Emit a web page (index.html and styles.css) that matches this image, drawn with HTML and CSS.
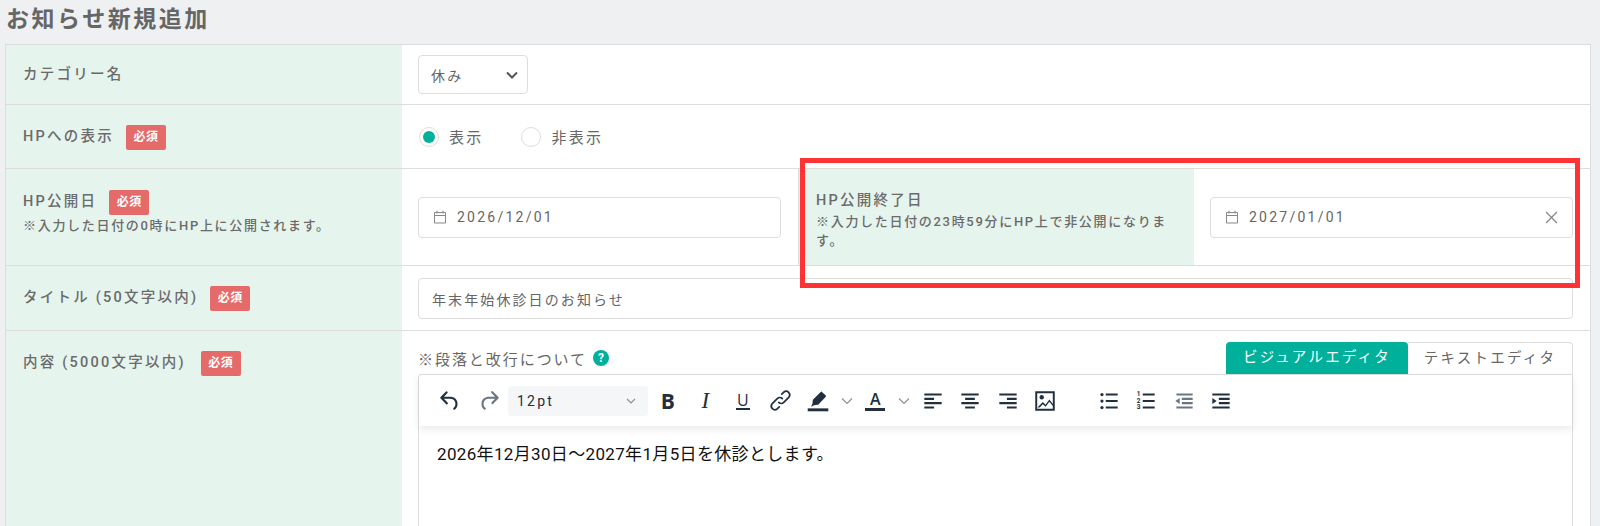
FILE: index.html
```html
<!DOCTYPE html>
<html lang="ja">

<head>
  <meta charset="UTF-8">
  <meta name="viewport" content="width=device-width, initial-scale=1.0">
  <title>お知らせ新規追加</title>
  <link rel="stylesheet" href="styles.css">
</head>

<body>
  <h1 class="page-title">お知らせ新規追加</h1>

  <div class="form-table">
    <div class="row">
      <div class="label label--single">カテゴリー名</div>
      <div class="field field--select">
        <div class="select-box">
          <span>休み</span>
          <svg class="select-arrow" viewBox="0 0 12 8"><path d="M1 1.5l5 5 5-5" /></svg>
        </div>
      </div>
    </div>

    <div class="row">
      <div class="label"><span class="label-head">HPへの表示<span class="badge">必須</span></span></div>
      <div class="field radios">
        <span class="radio radio--on"></span><span class="radio-text">表示</span>
        <span class="radio"></span><span class="radio-text">非表示</span>
      </div>
    </div>

    <!-- 公開日は4カラム -->
    <div class="row row--dates">
      <div class="label label--half">
        <span class="label-head">HP公開日<span class="badge">必須</span></span>
        <p class="note">※入力した日付の0時にHP上に公開されます。</p>
      </div>
      <div class="field field--half">
        <div class="input">
          <svg class="cal" viewBox="0 0 16 16"><path d="M2.5 3.5h11v10.5h-11zM2.5 6.5h11M5 1.5v3M11 1.5v3" /></svg>
          <span>2026/12/01</span>
        </div>
      </div>
      <div class="label label--half label--second">
        <span class="label-head">HP公開終了日</span>
        <p class="note">※入力した日付の23時59分にHP上で非公開になります。</p>
      </div>
      <div class="field field--half">
        <div class="input">
          <svg class="cal" viewBox="0 0 16 16"><path d="M2.5 3.5h11v10.5h-11zM2.5 6.5h11M5 1.5v3M11 1.5v3" /></svg>
          <span>2027/01/01</span>
          <svg class="clear" viewBox="0 0 12 12"><path d="M1 1l10 10M11 1L1 11" /></svg>
        </div>
      </div>
    </div>

    <div class="row">
      <div class="label"><span class="label-head">タイトル (50文字以内)<span class="badge">必須</span></span></div>
      <div class="field field--title">
        <div class="input input--wide"><span>年末年始休診日のお知らせ</span></div>
      </div>
    </div>

    <div class="row row--last">
      <div class="label"><span class="label-head">内容 (5000文字以内)<span class="badge">必須</span></span></div>
      <div class="field field--editor">
        <div class="editor-head">
          <div class="help">※段落と改行について<span class="help-mark">?</span></div>
          <div class="tabs">
            <span class="tab tab--on">ビジュアルエディタ</span>
            <span class="tab">テキストエディタ</span>
          </div>
        </div>
        <div class="editor">
          <div class="toolbar">
            <span class="tb-btn"><svg viewBox="0 0 24 24"><path d="M6.4 8H12c3.7 0 6.2 2 6.8 5.1.6 2.7-.4 5.6-2.3 6.8a1 1 0 01-1-1.8c1.1-.6 1.8-2.7 1.4-4.6-.5-2.1-2.1-3.5-4.9-3.5H6.4l3.3 3.3a1 1 0 11-1.4 1.4l-5-5a1 1 0 010-1.4l5-5a1 1 0 011.4 1.4L6.4 8z" /></svg></span>
            <span class="tb-btn tb-btn--off tb-btn--redo"><svg viewBox="0 0 24 24"><path d="M17.6 10H12c-2.8 0-4.4 1.4-4.9 3.5-.4 2 .3 4 1.4 4.6a1 1 0 11-1 1.8c-2-1.2-2.9-4.1-2.3-6.8.6-3 3-5.1 6.8-5.1h5.6l-3.3-3.3a1 1 0 111.4-1.4l5 5a1 1 0 010 1.4l-5 5a1 1 0 01-1.4-1.4l3.3-3.3z" /></svg></span>
            <span class="tb-select">12pt<svg class="tb-arrow" viewBox="0 0 10 6"><path d="M1 1l4 4 4-4" /></svg></span>
            <span class="tb-btn tb-btn--b">B</span>
            <span class="tb-btn tb-btn--i">I</span>
            <span class="tb-btn tb-btn--u"><span>U</span></span>
            <span class="tb-btn tb-btn--link"><svg viewBox="0 0 24 24"><path d="M10.5 13.5a3 3 0 004.2 0l4.300-4.300a3 3 0 00-4.200-4.200l-1.800 1.800M13.500 10.500a3 3 0 00-4.200 0L5 14.800A3 3 0 009.200 19l1.800-1.800" /></svg></span>
            <span class="tb-btn"><svg viewBox="0 0 24 24"><path d="M15.6 3.6l3.4 3.2a1 1 0 010 1.400l-6.600 7a1 1 0 01-.7.300l-3.300.400-2.800 1.400 1.300-2.900.3-3.200a1 1 0 01.3-.7l7-6.900a1 1 0 011.400 0z" /><rect x="2.500" y="18.800" width="19" height="2.700" /></svg></span>
            <svg class="tb-chevron" viewBox="0 0 12 8"><path d="M1 1.500l5 5 5-5" /></svg>
            <span class="tb-btn tb-btn--a"><span>A</span></span>
            <svg class="tb-chevron" viewBox="0 0 12 8"><path d="M1 1.500l5 5 5-5" /></svg>
            <span class="tb-btn"><svg viewBox="0 0 24 24"><path d="M4 5h16v2H4zM4 9h9v2H4zM4 13h16v2H4zM4 17h9v2H4z" /></svg></span>
            <span class="tb-btn"><svg viewBox="0 0 24 24"><path d="M4 5h16v2H4zM7.500 9h9v2h-9zM4 13h16v2H4zM7.500 17h9v2h-9z" /></svg></span>
            <span class="tb-btn"><svg viewBox="0 0 24 24"><path d="M4 5h16v2H4zM11 9h9v2h-9zM4 13h16v2H4zM11 17h9v2h-9z" /></svg></span>
            <span class="tb-btn"><svg viewBox="0 0 24 24"><path fill-rule="evenodd" d="M3 3h18v18H3zM4.800 4.800v14.400h14.400V4.800z" /><circle cx="9" cy="8.500" r="2" /><path d="M5 18l5-5 2.500 2.500L16 10.500l3.500 4.500v1.800L16 12.700l-3.400 4.600-2.600-2.400-3 3.100z" /></svg></span>
            <span class="tb-btn tb-btn--group"><svg viewBox="0 0 24 24"><circle cx="5.500" cy="6" r="1.500" /><circle cx="5.500" cy="12" r="1.500" /><circle cx="5.500" cy="18" r="1.500" /><path d="M9 5h11v2H9zM9 11h11v2H9zM9 17h11v2H9z" /></svg></span>
            <span class="tb-btn"><svg viewBox="0 0 24 24"><text class="num" x="3.500" y="7.500">1</text><text class="num" x="3.500" y="13.500">2</text><text class="num" x="3.500" y="19.500">3</text><path d="M9 5h11v2H9zM9 11h11v2H9zM9 17h11v2H9z" /></svg></span>
            <span class="tb-btn tb-btn--off"><svg viewBox="0 0 24 24"><path d="M5 5h15v2H5zM10 9h10v2H10zM10 13h10v2H10zM5 17h15v2H5zM8 9.300v5.400L4 12z" /></svg></span>
            <span class="tb-btn"><svg viewBox="0 0 24 24"><path d="M4 5h16v2H4zM10 9h10v2H10zM10 13h10v2H10zM4 17h16v2H4zM4 9.300v5.400L8 12z" /></svg></span>
          </div>
          <div class="editor-body">2026年12月30日〜2027年1月5日を休診とします。</div>
        </div>
      </div>
    </div>
  </div>

  <div class="highlight-box"></div>
</body>

</html>
```

FILE: styles.css
```css
* {
  box-sizing: border-box;
}

html,
body {
  height: 526px;
  overflow: hidden;
}

body {
  margin: 0;
  padding: 0 9px 0 5px;
  background: #eef0f2;
  color: #666;
  font-family: "Roboto", "Noto Sans CJK JP", sans-serif;
  font-size: 14px;
  letter-spacing: .16em;
  position: relative;
}

.page-title {
  margin: 0;
  height: 44px;
  padding-left: 1px;
  font-size: 23px;
  line-height: 40px;
  font-weight: 700;
  letter-spacing: .11em;
  color: #666;
}

.form-table {
  background: #fff;
  border: 1px solid #ddd;
  border-bottom: 0;
}

.row {
  display: flex;
  border-bottom: 1px solid #ddd;
}

.row--dates {
  height: 97px;
}

.row--last {
  border-bottom: 0;
  height: 195px;
}

.label {
  width: 25%;
  flex: none;
  padding: 20px 17px 18px;
  background: #e5f4ed;
  font-size: 14.5px;
  font-weight: 500;
  color: #6b6b6b;
}

.label--single {
  padding-top: 17px;
  padding-bottom: 16px;
  line-height: 25px;
}

.label--half {
  padding-top: 21px;
  padding-bottom: 0;
}

.label--second {
  padding-top: 20px;
  border-left: 1px solid #ddd;
}

.label-head {
  display: flex;
  align-items: flex-start;
  height: 25px;
  line-height: 23px;
}

.badge {
  margin-left: 12px;
  width: 40px;
  height: 25px;
  line-height: 25px;
  text-align: center;
  background: #e56a6a;
  border-radius: 2px;
  color: #fff;
  font-size: 12px;
  font-weight: 700;
  letter-spacing: .04em;
}

.row--last .badge {
  margin-left: 15px;
}

.note {
  margin: 2px 0 0;
  font-size: 13px;
  line-height: 18px;
  letter-spacing: .13em;
}

.label--second .note {
  margin-top: -2px;
  line-height: 19px;
}

.field {
  flex: 1;
  padding: 11px 17px 11px 16px;
}

.field--half {
  width: 25%;
  flex: none;
  display: flex;
  align-items: center;
}

.field--select {
  padding-top: 10px;
  padding-bottom: 10px;
}

.field--title {
  padding-top: 12px;
}

.select-box {
  width: 110px;
  height: 39px;
  padding: 0 9px 0 12px;
  display: flex;
  align-items: center;
  justify-content: space-between;
  border: 1px solid #ddd;
  border-radius: 4px;
  font-size: 14px;
}

.select-arrow {
  width: 12px;
  height: 8px;
  fill: none;
  stroke: #555;
  stroke-width: 2;
}

.radios {
  display: flex;
  align-items: center;
  padding-top: 21px;
  padding-bottom: 21px;
  padding-left: 17px;
  font-size: 15px;
}

.radio {
  width: 20px;
  height: 20px;
  border-radius: 50%;
  border: 1px solid #ddd;
  background: #fff;
  display: flex;
  align-items: center;
  justify-content: center;
}

.radio--on::after {
  content: '';
  width: 12px;
  height: 12px;
  border-radius: 50%;
  background: #00b09b;
}

.radio-text {
  margin: 0 38px 0 10px;
}

.input {
  width: 100%;
  height: 41px;
  padding: 0 12px 0 13px;
  display: flex;
  align-items: center;
  border: 1px solid #ddd;
  border-radius: 4px;
  background: #fff;
}

.input--wide {
  letter-spacing: .15em;
}

.cal {
  width: 16px;
  height: 16px;
  margin-right: 9px;
  fill: none;
  stroke: #888;
  stroke-width: 1;
}

.clear {
  width: 13px;
  height: 13px;
  margin-left: auto;
  margin-right: 2px;
  fill: none;
  stroke: #888;
  stroke-width: 1.2;
}

.field--editor {
  padding-top: 11px;
  padding-bottom: 0;
}

.editor-head {
  display: flex;
  justify-content: space-between;
  height: 32px;
}

.help {
  display: flex;
  align-items: center;
  height: 32px;
  font-size: 15px;
  letter-spacing: .13em;
}

.help-mark {
  margin-left: 6px;
  width: 16px;
  height: 16px;
  border-radius: 50%;
  background: #00b09b;
  color: #fff;
  font-size: 12px;
  font-weight: 700;
  line-height: 16px;
  text-align: center;
  letter-spacing: 0;
}

.tabs {
  display: flex;
}

.tab {
  width: 165px;
  height: 32px;
  line-height: 31px;
  text-align: center;
  border: 1px solid #ddd;
  border-bottom: 0;
  border-left: 0;
  border-radius: 0 4px 0 0;
  font-size: 14.5px;
}

.tab--on {
  width: 182px;
  background: #00b09b;
  border: 0;
  border-radius: 4px 4px 0 0;
  color: #fff;
}

.editor {
  height: 152px;
  border: 1px solid #ddd;
  border-bottom: 0;
  border-radius: 4px 0 0 0;
  background: #fff;
}

.toolbar {
  height: 51px;
  padding-left: 12px;
  display: flex;
  align-items: center;
  box-shadow: 0 3px 8px rgba(0, 0, 0, .09);
  color: #222f3e;
}

.tb-btn {
  width: 37.5px;
  height: 32px;
  flex: none;
  display: flex;
  align-items: center;
  justify-content: center;
  letter-spacing: 0;
}

.tb-btn svg {
  width: 26px;
  height: 26px;
  fill: #222f3e;
}

.tb-btn--link svg {
  width: 29px;
  height: 29px;
  fill: none;
  stroke: #222f3e;
  stroke-width: 1.4;
  stroke-linecap: round;
}

.tb-btn .num {
  font-family: "Roboto", sans-serif;
  font-size: 6px;
  font-weight: 700;
}

.tb-btn--off svg {
  fill: #6b7683;
}

.tb-btn--redo {
  margin-left: 2px;
}

.tb-btn--group {
  margin-left: 26px;
}

.tb-btn--b {
  margin-left: 1px;
  font-family: "Open Sans", sans-serif;
  font-size: 21px;
  font-weight: 700;
}

.tb-btn--i {
  font-family: "Liberation Serif", serif;
  font-size: 23px;
  font-style: italic;
}

.tb-btn--u span {
  font-family: "Open Sans", sans-serif;
  font-size: 16px;
  font-weight: 500;
  line-height: 16px;
  padding: 0 1px;
  border-bottom: 2px solid #222f3e;
}

.tb-btn--a span {
  width: 20px;
  text-align: center;
  font-family: "Open Sans", sans-serif;
  font-size: 16px;
  font-weight: 600;
  line-height: 18px;
  border-bottom: 3px solid #222f3e;
}

.tb-chevron {
  width: 20px;
  height: 8px;
  flex: none;
  fill: none;
  stroke: #8a929c;
  stroke-width: 1.2;
}

.tb-select {
  width: 140px;
  height: 30px;
  padding: 0 12px 0 9px;
  display: flex;
  align-items: center;
  justify-content: space-between;
  background: #f5f6f7;
  border-radius: 3px;
  font-size: 14px;
}

.tb-arrow {
  width: 10px;
  height: 6px;
  fill: none;
  stroke: #8a929c;
  stroke-width: 1.2;
}

.editor-body {
  padding: 17px 18px;
  color: #111;
  font-size: 17px;
  line-height: 22px;
  letter-spacing: .02em;
}

/* 赤枠 */
.highlight-box {
  position: absolute;
  left: 800px;
  top: 158px;
  width: 780px;
  height: 130px;
  border: 5px solid #ff3333;
}
```
